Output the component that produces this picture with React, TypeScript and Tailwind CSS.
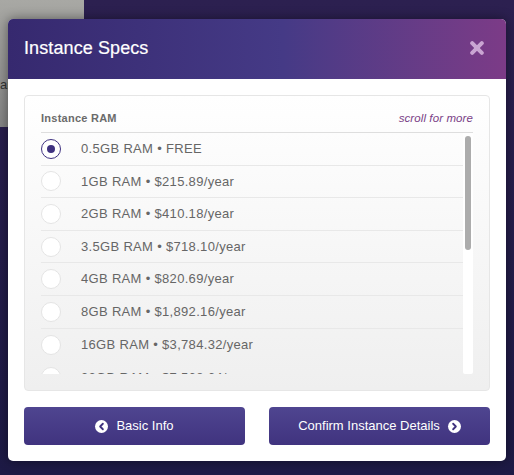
import { ChevronLeft, ChevronRight } from 'lucide-react';

const plans = [
  '0.5GB RAM • FREE',
  '1GB RAM • $215.89/year',
  '2GB RAM • $410.18/year',
  '3.5GB RAM • $718.10/year',
  '4GB RAM • $820.69/year',
  '8GB RAM • $1,892.16/year',
  '16GB RAM • $3,784.32/year',
  '32GB RAM • $7,568.64/year',
];

export default function App() {
  return (
    <div className="relative h-[475px] w-[514px] overflow-hidden bg-gradient-to-b from-[#2c2050] to-[#1d1a45] font-['Liberation_Sans',Arial,sans-serif]">
      {/* page behind the overlay */}
      <div className="h-[127px] w-[84px] overflow-hidden bg-gradient-to-b from-[#a8a8a4] to-[#858585] text-[13px] leading-4 text-[#333]">
        <p className="-mt-[12px] -ml-[1px]">nstance</p>
        <p className="mt-[73px]">ar</p>
      </div>

      {/* modal */}
      <div className="absolute left-2 top-[19px] w-[498px] overflow-hidden rounded-[5px] bg-white shadow-[0_0_12px_rgba(0,0,0,0.45)]">
        <div className="flex h-[60px] items-center justify-between bg-gradient-to-r from-[#36296f] via-[#453a86] via-55% to-[#7c3b87] pl-4 pr-[22px]">
          <h2 className="-mt-[2px] text-[18px] tracking-[0.1px] text-white [-webkit-text-stroke:0.2px_white]">Instance Specs</h2>
          <svg width="14" height="14" viewBox="0 0 14 14" className="-mt-[2px]">
            <path d="M2.2 2.2 L11.8 11.8 M11.8 2.2 L2.2 11.8" stroke="#c9a5d2" strokeWidth="4" strokeLinecap="round" />
          </svg>
        </div>

        <div className="p-4">
          <div className="rounded-[4px] border border-[#e6e6e6] bg-gradient-to-b from-white to-[#efefef] px-4 pb-[16px] pt-[16px]">
            <div className="flex items-center justify-between pb-[7px] leading-[13px]">
              <span className="text-[11px] font-bold tracking-[0.25px] text-[#6b6b6b]">Instance RAM</span>
              <span className="text-[11.5px] italic tracking-[0.1px] text-[#7a3f86]">scroll for more</span>
            </div>
            <div className="relative h-[242px] overflow-hidden border-t border-[#dedede]">
              {plans.map((plan, i) => (
                <div
                  key={plan}
                  className={i < 6 ? 'mr-[10px] flex h-[32.6px] items-center border-b border-[#e8e8e8]' : 'mr-[10px] flex h-[32.6px] items-center'}
                >
                  {i === 0 ? (
                    <span className="flex h-5 w-5 items-center justify-center rounded-full border border-[#3f3280] bg-white">
                      <span className="h-2 w-2 rounded-full bg-[#3f3280]" />
                    </span>
                  ) : (
                    <span className="h-5 w-5 rounded-full border border-[#e4e4e4] bg-white" />
                  )}
                  <span className="ml-5 text-[13px] tracking-[0.32px] text-[#666]">{plan}</span>
                </div>
              ))}
              <div className="absolute right-0 top-0 h-full w-[10px] rounded-b-[2px] bg-white">
                <div className="mx-auto mt-[3px] h-[114px] w-[6px] rounded-full bg-[#acacac]" />
              </div>
            </div>
          </div>

          <div className="mt-4 flex justify-between">
            <button className="flex h-[38px] w-[221px] items-center justify-center gap-2 rounded-[4px] bg-gradient-to-b from-[#4f4590] to-[#40337f] text-[13px] font-medium text-white">
              <span className="flex h-[13px] w-[13px] items-center justify-center rounded-full bg-white">
                <ChevronLeft className="h-[11px] w-[11px] text-[#40337f]" strokeWidth={4} />
              </span>
              Basic Info
            </button>
            <button className="flex h-[38px] w-[221px] items-center justify-center gap-2 rounded-[4px] bg-gradient-to-b from-[#4f4590] to-[#40337f] text-[13px] font-medium text-white">
              Confirm Instance Details
              <span className="flex h-[13px] w-[13px] items-center justify-center rounded-full bg-white">
                <ChevronRight className="h-[11px] w-[11px] text-[#40337f]" strokeWidth={4} />
              </span>
            </button>
          </div>
        </div>
      </div>
    </div>
  );
}
